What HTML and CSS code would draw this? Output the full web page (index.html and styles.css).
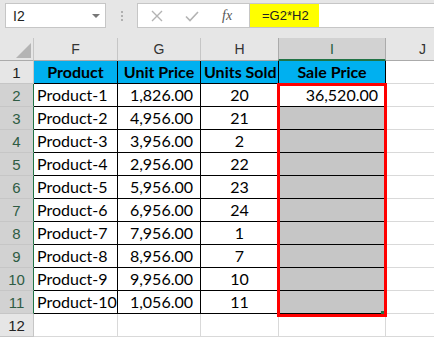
FILE: index.html
```html
<!DOCTYPE html>
<html lang="en">
<head>
  <meta charset="UTF-8" />
  <title>Sale Price Formula</title>
  <link rel="stylesheet" href="styles.css">
</head>
<body>
  <!-- Formula bar -->
  <div class="toolbar">
    <div class="namebox">
      <span>I2</span>
      <span class="caret"></span>
    </div>
    <div class="grip"><i></i><i></i><i></i></div>
    <div class="fbuttons">
      <svg width="14" height="14" viewBox="0 0 14 14"><path d="M2 2 L12 12 M12 2 L2 12" stroke="#b3b3b3" stroke-width="1.4" fill="none"/></svg>
      <svg width="16" height="14" viewBox="0 0 16 14"><path d="M2 7.5 L6 11.5 L14 3" stroke="#b3b3b3" stroke-width="1.6" fill="none"/></svg>
      <span class="fx">fx</span>
    </div>
    <div class="formula"><span class="hl">=G2*H2</span></div>
  </div>

  <!-- Sheet -->
  <div class="sheet">
    <div class="grid">
      <div class="corner"><svg width="34" height="23" viewBox="0 0 34 23"><polygon points="16,20 31,20 31,5" fill="#b4b4b4"/></svg></div>
      <div class="ch">F</div>
      <div class="ch">G</div>
      <div class="ch">H</div>
      <div class="ch sel">I</div>
      <div class="ch last">J</div>

      <div class="rh">1</div>
      <div class="c t hd">Product</div>
      <div class="c t hd">Unit Price</div>
      <div class="c t hd">Units Sold</div>
      <div class="c t hd">Sale Price</div>
      <div class="c j"></div>

      <div class="rh sel">2</div>
      <div class="c t">Product-1</div>
      <div class="c t num">1,826.00</div>
      <div class="c t mid">20</div>
      <div class="c t num">36,520.00</div>
      <div class="c j"></div>

      <div class="rh sel">3</div>
      <div class="c t">Product-2</div>
      <div class="c t num">4,956.00</div>
      <div class="c t mid">21</div>
      <div class="c t fill"></div>
      <div class="c j"></div>

      <div class="rh sel">4</div>
      <div class="c t">Product-3</div>
      <div class="c t num">3,956.00</div>
      <div class="c t mid">2</div>
      <div class="c t fill"></div>
      <div class="c j"></div>

      <div class="rh sel">5</div>
      <div class="c t">Product-4</div>
      <div class="c t num">2,956.00</div>
      <div class="c t mid">22</div>
      <div class="c t fill"></div>
      <div class="c j"></div>

      <div class="rh sel">6</div>
      <div class="c t">Product-5</div>
      <div class="c t num">5,956.00</div>
      <div class="c t mid">23</div>
      <div class="c t fill"></div>
      <div class="c j"></div>

      <div class="rh sel">7</div>
      <div class="c t">Product-6</div>
      <div class="c t num">6,956.00</div>
      <div class="c t mid">24</div>
      <div class="c t fill"></div>
      <div class="c j"></div>

      <div class="rh sel">8</div>
      <div class="c t">Product-7</div>
      <div class="c t num">7,956.00</div>
      <div class="c t mid">1</div>
      <div class="c t fill"></div>
      <div class="c j"></div>

      <div class="rh sel">9</div>
      <div class="c t">Product-8</div>
      <div class="c t num">8,956.00</div>
      <div class="c t mid">7</div>
      <div class="c t fill"></div>
      <div class="c j"></div>

      <div class="rh sel">10</div>
      <div class="c t">Product-9</div>
      <div class="c t num">9,956.00</div>
      <div class="c t mid">10</div>
      <div class="c t fill"></div>
      <div class="c j"></div>

      <div class="rh sel">11</div>
      <div class="c t">Product-10</div>
      <div class="c t num">1,056.00</div>
      <div class="c t mid">11</div>
      <div class="c t fill"></div>
      <div class="c j"></div>

      <div class="rh">12</div>
      <div class="c"></div>
      <div class="c"></div>
      <div class="c"></div>
      <div class="c"></div>
      <div class="c j"></div>
    </div>
    <!-- red outline drawn over I2:I11 -->
    <div class="selection"><span class="handle"></span></div>
  </div>
</body>
</html>
```

FILE: styles.css
```css
/* Global */
body {
  margin: 0;
  width: 434px;
  height: 339px;
  overflow: hidden;
  background-color: #fff;
  font-family: "Lato", "Liberation Sans", sans-serif;
}
/* Formula bar */
.toolbar {
  display: flex;
  align-items: flex-start;
  height: 38px;
  box-sizing: border-box;
  padding: 3px 0 0 5px;
  background-color: #e6e6e6;
  font-family: "Liberation Sans", Arial, sans-serif;
  font-size: 13px;
  color: #222;
}
.namebox {
  display: flex;
  align-items: center;
  justify-content: space-between;
  width: 101px;
  height: 25px;
  box-sizing: border-box;
  padding: 0 5px 0 7px;
  background-color: #fff;
  border: 1px solid #c6c6c6;
  font-size: 14px;
}
.caret {
  width: 0;
  height: 0;
  border-left: 4px solid transparent;
  border-right: 4px solid transparent;
  border-top: 4px solid #777;
}
.grip {
  display: flex;
  flex-direction: column;
  align-items: center;
  gap: 2px;
  width: 31px;
  padding-top: 8px;
}
.grip i {
  width: 2px;
  height: 2px;
  background-color: #b0b0b0;
}
.fbuttons {
  display: flex;
  align-items: center;
  width: 113px;
  height: 25px;
  box-sizing: border-box;
  padding-left: 12px;
  background-color: #fff;
  border: 1px solid #c6c6c6;
}
.fbuttons svg {
  margin-right: 20px;
}
.fbuttons svg + svg {
  margin-right: 22px;
}
.fx {
  font-family: "Liberation Serif", "Times New Roman", serif;
  font-style: italic;
  font-size: 14px;
  color: #555;
}
.formula {
  flex: 1;
  height: 25px;
  box-sizing: border-box;
  background-color: #fff;
  border-top: 1px solid #c6c6c6;
  border-bottom: 1px solid #c6c6c6;
}
.formula .hl {
  display: inline-block;
  width: 69px;
  height: 100%;
  box-sizing: border-box;
  padding: 4px 0 0 12px;
  background-color: #ffff00;
  color: #222;
}
/* Sheet */
.sheet {
  position: relative;
}
.grid {
  display: grid;
  grid-template-columns: 34px 84px 83px 78px 107px 1fr;
  grid-auto-rows: 23px;
}
.grid > div {
  box-sizing: border-box;
}
.corner {
  background-color: #e6e6e6;
  border-right: 1px solid #c6c6c6;
  border-bottom: 1px solid #ababab;
}
.ch {
  display: flex;
  align-items: center;
  justify-content: center;
  background-color: #e6e6e6;
  border-right: 1px solid #c6c6c6;
  border-bottom: 1px solid #ababab;
  font-family: "Liberation Sans", Arial, sans-serif;
  font-size: 14px;
  color: #333;
}
.ch.sel {
  background-color: #d2d2d2;
  border-left: 1px solid #ababab;
  border-right: 1px solid #ababab;
  border-bottom: 2px solid #217346;
  margin-left: -1px;
  color: #225e3f;
}
.ch.last {
  justify-content: flex-start;
  padding-left: 33px;
  border-right: none;
}
.rh {
  display: flex;
  align-items: center;
  justify-content: center;
  background-color: #e6e6e6;
  border-right: 1px solid #c6c6c6;
  border-bottom: 1px solid #c6c6c6;
  font-family: "Liberation Sans", Arial, sans-serif;
  font-size: 15px;
  color: #222;
}
.rh.sel {
  background-color: #d2d2d2;
  border-right: 1px solid #217346;
  color: #2e5c44;
}
.c {
  padding: 0 3px;
  line-height: 22px;
  font-size: 16px;
  white-space: nowrap;
  color: #000;
  border-right: 1px solid #d9d9d9;
  border-bottom: 1px solid #d9d9d9;
}
.c.t {
  border-right-color: #000;
  border-bottom-color: #000;
}
.c.j {
  border-right: none;
}
.hd {
  background-color: #00b0f0;
  font-weight: bold;
  text-align: center;
}
.num {
  text-align: right;
  padding-right: 7px;
}
.mid {
  text-align: center;
}
.fill {
  background-color: #c6c6c6;
}
/* Selected range outline */
.selection {
  position: absolute;
  top: 45px;
  left: 277px;
  width: 110px;
  height: 234px;
  box-sizing: border-box;
  border: 3px solid #ff0000;
  pointer-events: none;
}
.handle {
  position: absolute;
  right: 0;
  bottom: 0;
  width: 3px;
  height: 3px;
  background-color: #217346;
}
```
